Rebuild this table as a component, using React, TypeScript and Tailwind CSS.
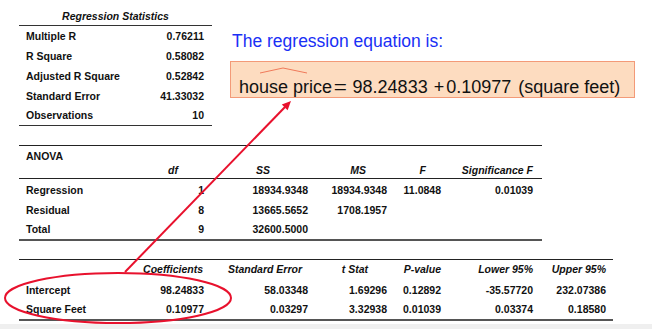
const stats: [string, string][] = [
  ["Multiple R", "0.76211"],
  ["R Square", "0.58082"],
  ["Adjusted R Square", "0.52842"],
  ["Standard Error", "41.33032"],
  ["Observations", "10"],
];

const anovaRows = [
  ["Regression", "1", "18934.9348", "18934.9348", "11.0848", "0.01039"],
  ["Residual", "8", "13665.5652", "1708.1957", "", ""],
  ["Total", "9", "32600.5000", "", "", ""],
];

const coefRows = [
  ["Intercept", "98.24833", "58.03348", "1.69296", "0.12892", "-35.57720", "232.07386"],
  ["Square Feet", "0.10977", "0.03297", "3.32938", "0.01039", "0.03374", "0.18580"],
];

// column boxes shared by both tables (label, then numeric columns)
const cols = ["w-[111px]", "w-[74px]", "w-[104px]", "w-[79px]", "w-[54px]", "w-[92px]", "w-[73px]"];

function Row({ cells, h, widths = cols }: { cells: string[]; h: string; widths?: string[] }) {
  return (
    <div className={`flex ${h} items-center`}>
      {cells.map((c, i) => (
        <div key={i} className={`${widths[i]} shrink-0 ${i === 0 ? "pl-[7px] text-left" : "text-right"}`}>
          {c}
        </div>
      ))}
    </div>
  );
}

function Overlay() {
  return (
    <svg className="pointer-events-none absolute left-0 top-0" width="652" height="329" viewBox="0 0 652 329">
      <ellipse cx="118" cy="298" rx="113" ry="25" fill="none" stroke="#e8112d" strokeWidth="2" />
      <line x1="125" y1="272" x2="285" y2="107" stroke="#e8112d" strokeWidth="2" />
      <polygon points="291,101 287.6,110.2 281.8,104.6" fill="#e8112d" />
    </svg>
  );
}

export default function App() {
  return (
    <div className="relative flex h-[329px] w-[652px] flex-col overflow-hidden bg-white font-['Liberation_Sans',Arial,sans-serif] text-[#111]">
      {/* top: summary stats + equation */}
      <div className="flex h-[145px] shrink-0">
        <div className="ml-[19px] w-[193px] text-[10.5px] font-bold">
          <div className="h-[26px] border-b border-[#333] pt-[9px] text-center italic leading-[14px]">
            Regression Statistics
          </div>
          <div className="pt-[1px]">
            {stats.map(([k, v], i) => (
              <div key={k} className={`flex items-center justify-between pl-[7px] pr-[8px] ${i === 4 ? "h-[18px]" : "h-[20px]"}`}>
                <span>{k}</span>
                <span>{v}</span>
              </div>
            ))}
          </div>
          <div className="border-t border-[#333]" />
        </div>

        <div className="ml-[18px] flex flex-col">
          <div className="mt-[31px] pl-[2px] text-[17.5px] leading-[20px] text-[#1a30f5]">The regression equation is:</div>
          <div className="relative mt-[10px] h-[37px] w-[405px] border border-[#f39a78] bg-[#fddcc0]">
            <svg className="absolute left-[29px] top-[5px]" width="48" height="7" viewBox="0 0 48 7">
              <polyline points="0,6 23,1 47,6" fill="none" stroke="#f07a5a" strokeWidth="1" />
            </svg>
            <div className="flex pl-[8px] pt-[16px] text-[18px] leading-[18px] text-[#111]">
              <span>house price</span>
              <span className="ml-[3px] inline-block scale-x-125">=</span>
              <span className="ml-[7px]">98.24833</span>
              <span className="ml-[6px]">+</span>
              <span className="ml-[2px]">0.10977</span>
              <span className="ml-[7px]">(square feet)</span>
            </div>
          </div>
        </div>
      </div>

      {/* ANOVA */}
      <div className="ml-[19px] w-[523px] shrink-0 border-t border-[#222] text-[10.5px] font-bold">
        <div className="h-[17px] pl-[7px] pt-[4px] leading-[13px]">ANOVA</div>
        <div className="flex h-[16px] items-center border-b border-[#222] italic">
          <div className="w-[111px] shrink-0" />
          <div className="w-[74px] shrink-0 pr-[26px] text-right">df</div>
          <div className="w-[104px] shrink-0 pr-[38px] text-right">SS</div>
          <div className="w-[79px] shrink-0 pr-[21px] text-right">MS</div>
          <div className="w-[54px] shrink-0 pr-[15px] text-right">F</div>
          <div className="w-[92px] shrink-0 text-right">Significance F</div>
        </div>
        <div className="border-b-2 border-[#555] pt-[2px]">
          {anovaRows.map((r, i) => (
            <Row key={r[0]} cells={r} h={i === 2 ? "h-[18px]" : "h-[20px]"} />
          ))}
        </div>
      </div>

      {/* coefficients */}
      <div className="ml-[19px] mt-[18px] w-[594px] shrink-0 border-t border-[#222] text-[10.5px] font-bold">
        <div className="flex h-[20px] items-center italic">
          <div className="w-[111px] shrink-0" />
          <div className="w-[74px] shrink-0 pr-[1px] text-right">Coefficients</div>
          <div className="w-[104px] shrink-0 pr-[6px] text-right">Standard Error</div>
          <div className="w-[79px] shrink-0 pr-[19px] text-right">t Stat</div>
          <div className="w-[54px] shrink-0 text-right">P-value</div>
          <div className="w-[92px] shrink-0 text-right">Lower 95%</div>
          <div className="w-[73px] shrink-0 text-right">Upper 95%</div>
        </div>
        <div className="border-b-2 border-[#555] pt-[1px]">
          {coefRows.map((r, i) => (
            <Row key={r[0]} cells={r} h={i === 1 ? "h-[18px]" : "h-[20px]"} />
          ))}
        </div>
      </div>

      <div className="mt-[3px] flex-1 bg-[#efefef]" />

      <Overlay />
    </div>
  );
}
